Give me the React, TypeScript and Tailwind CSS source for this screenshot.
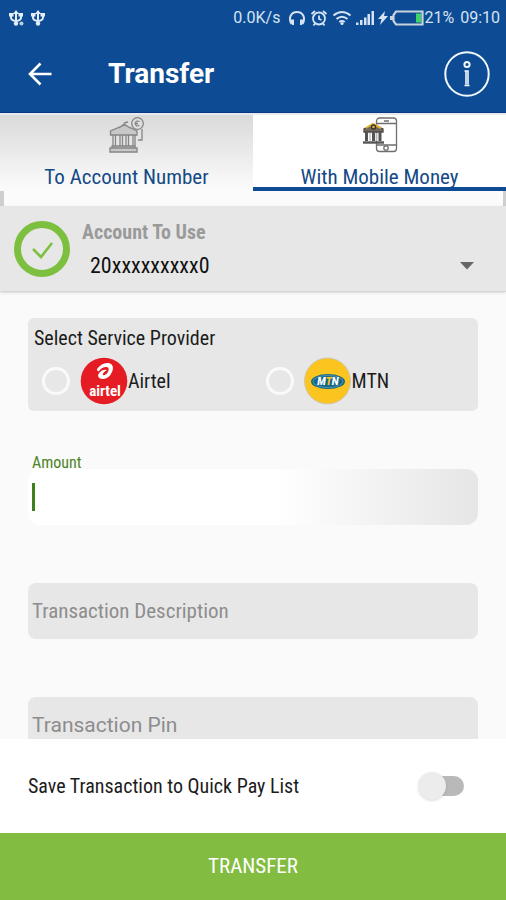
import type { ReactNode } from "react";

const TEXT = "font-['Roboto_Condensed',Roboto,sans-serif]";

function UsbIcon({ dot }: { dot?: boolean }) {
  return (
    <svg viewBox="0 0 16 16" className="h-4 w-4" fill="none" stroke="#e4edf7" strokeWidth="2" aria-hidden="true">
      <path d="M8 2v12M3 4v3.500q0 3 5 3.500M13 4v3.500q0 3-5 3.500" />
      <path d="M8 0l3 4H5zM1 3h4.500v3.500H1zM10.500 3H15v3.500h-4.500z" fill="#e4edf7" stroke="none" />
      <circle cx="8" cy="13.500" r="2.200" fill="#e4edf7" stroke="none" />
      {dot && <circle cx="13.500" cy="13.500" r="2" fill="#b9cfe8" stroke="none" />}
    </svg>
  );
}

function StatusBar() {
  return (
    <div className="flex h-9 items-center justify-between pr-1.5 pl-2 text-base text-[#d5e3f4] font-[Roboto,sans-serif]">
      <div className="flex gap-1.5">
        <UsbIcon dot />
        <UsbIcon />
      </div>
      <div className="flex items-center">
        <span>0.0K/s</span>
        <svg viewBox="0 0 18 18" className="ml-2 h-[18px] w-[18px]" fill="none" stroke="currentColor" strokeWidth="2" aria-hidden="true">
          <path d="M3.500 15C0 9 3 3 9 3s9 6 5.500 12" />
          <path d="M2 10.500h4V16H4zM16 10.500h-4V16h2z" fill="currentColor" stroke="none" />
        </svg>
        <svg viewBox="0 0 18 18" className="ml-1 h-[18px] w-[18px]" fill="none" stroke="currentColor" strokeWidth="1.800" aria-hidden="true">
          <circle cx="9" cy="9.500" r="6" />
          <path d="M9 6.500v3.500l2.500 1M1.500 5L5 2M16.500 5L13 2M5 14.500L3.500 16.500M13 14.500l1.500 2" />
        </svg>
        <svg viewBox="0 0 20 18" className="ml-1 h-[18px] w-5" fill="none" stroke="currentColor" strokeWidth="2" aria-hidden="true">
          <path d="M1.500 6.500q8.500-7 17 0M4.500 10q5.500-4.500 11 0M7.300 13q2.700-2 5.400 0" />
          <circle cx="10" cy="14.500" r="1.600" fill="currentColor" stroke="none" />
        </svg>
        <svg viewBox="0 0 18 18" className="ml-1 h-[18px] w-[18px]" fill="currentColor" aria-hidden="true">
          <path d="M0 13.500h2.500V16H0zM4 11h2.500v5H4zM8 8.500h2.500V16H8zM11.500 5H14v11h-2.500zM15.500 2H18v14h-2.500z" />
        </svg>
        <svg viewBox="0 0 10 18" className="ml-1 h-[18px] w-2.5" fill="currentColor" aria-hidden="true">
          <path d="M7 2L0 10h3.500L2 16l8-9H6z" />
        </svg>
        <svg viewBox="0 0 34 18" className="ml-0.5 h-[18px] w-[34px]" fill="none" aria-hidden="true">
          <path d="M6 2.500h26.500v13H6L3.500 12V6z" stroke="#c9d3dc" strokeWidth="2.200" />
          <path d="M0 7h3v4H0z" fill="#c9d3dc" />
          <path d="M26 4.500h5v9h-5z" fill="#3fd468" />
        </svg>
        <span>21%</span>
        <span className="ml-1.5">09:10</span>
      </div>
    </div>
  );
}

function Header() {
  return (
    <header className="h-[113px] shrink-0 border-b border-[#073b80] bg-[#0d4c94]">
      <StatusBar />
      <div className="flex h-[76px] items-center pr-4 pl-7">
        <button type="button" aria-label="Back" className="text-white">
          <svg viewBox="0 0 24 24" className="h-6 w-6" fill="none" stroke="currentColor" strokeWidth="2.600" aria-hidden="true">
            <path d="M23.500 12H3M12.500 1.500L2 12l10.500 10.500" />
          </svg>
        </button>
        <h1 className="ml-14 flex-1 text-[28px] font-bold text-white font-[Roboto,sans-serif]">Transfer</h1>
        <button type="button" aria-label="Information">
          <svg viewBox="0 0 46 46" className="h-[46px] w-[46px]" fill="none" stroke="#f1f7fd" aria-hidden="true">
            <circle cx="23" cy="23" r="21.700" strokeWidth="2" />
            <circle cx="23" cy="13.500" r="2.600" strokeWidth="2" />
            <path d="M20.500 20h3.500v13.500M20.500 34.500h5M22 20.500v13" strokeWidth="1.600" />
          </svg>
        </button>
      </div>
    </header>
  );
}

function BankIcon() {
  return (
    <svg viewBox="0 0 36 36" className="h-9 w-9" fill="none" stroke="#858585" strokeWidth="1.300" aria-hidden="true">
      <path d="M1.500 18V14l14-6 12.500 6v4zM1 31h27v4H1zM3 31v-2h23v2M10 11l5-4 6 4" fill="#c8c8c8" />
      <path d="M4 18v11M6.500 18v11M11 18v11M13.500 18v11M17 18v11M19.500 18v11M24 18v11M26 18v11" />
      <circle cx="28.500" cy="6.500" r="5.800" />
      <path d="M30.500 4.500q-4-1.500-4 2t4 2M25.500 6.500h3.500M33 12v11h-4M15 6l4-1" />
    </svg>
  );
}

function MobileMoneyIcon() {
  return (
    <svg viewBox="0 0 36 36" className="h-9 w-9" fill="none" stroke="#6f6f6f" strokeWidth="1.300" aria-hidden="true">
      <rect x="14.500" y="1" width="20" height="33.500" rx="3" fill="#fff" />
      <path d="M15 6.500h19M15 28h19M22 4h5" />
      <circle cx="24" cy="31" r="2.200" />
      <path d="M2 15v-3l9-4 10 4v3z" fill="#72685c" stroke="#4a4a4a" />
      <path d="M4 11l7-4 8 4" stroke="#e4b136" strokeWidth="2" />
      <circle cx="11.500" cy="10" r="2" fill="#e4b136" stroke="#333" />
      <path d="M4.500 15v9M11.500 15v9M18 15v9" stroke="#555" strokeWidth="3" />
      <path d="M8 16v8M14.500 16v8" stroke="#bbb" />
      <path d="M1 25.500h21" stroke="#555" strokeWidth="2.400" />
    </svg>
  );
}

function Tab({ label, icon, active }: { label: string; icon: ReactNode; active?: boolean }) {
  return (
    <button
      type="button"
      role="tab"
      aria-selected={!!active}
      className={`${TEXT} flex h-[76px] flex-1 flex-col items-center justify-end border-b-4 text-[21px] leading-5 text-[#144a86] ${
        active
          ? "border-[#0d4c94] bg-white"
          : "border-[#fafafa] bg-linear-to-b from-[#dadada] to-[#fafafa]"
      }`}
    >
      {icon}
      <span className="mt-3.5">{label}</span>
    </button>
  );
}

function Provider({ name, logo }: { name: string; logo: ReactNode }) {
  return (
    <label className="flex items-center">
      <input type="radio" name="provider" className="mr-2.5 h-7 w-7 appearance-none rounded-full border-3 border-[#fafafa] checked:bg-[#7fbf40]" />
      {logo}
      <span>{name}</span>
    </label>
  );
}

function AirtelLogo() {
  return (
    <svg viewBox="0 0 48 48" className="h-12 w-12" aria-hidden="true">
      <circle cx="24" cy="24" r="23.300" fill="#e51c23" />
      <path d="M17 12q5-7 12-6 6 2 3 9-3 7-9 7-5 0-5-4 3-6 9-5-5 3-4 5 3 1 5-3 2-5-2-5-4 0-7 4-2 1-2-2" fill="#fff" />
      <text x="25" y="39" textAnchor="middle" fontSize="15" fontWeight="700" fill="#fff" fontFamily="Roboto Condensed, Roboto, sans-serif">airtel</text>
    </svg>
  );
}

function MtnLogo() {
  return (
    <svg viewBox="0 0 48 48" className="h-12 w-12" aria-hidden="true">
      <circle cx="23.500" cy="24" r="23" fill="#fbc41f" stroke="#cfc7ae" />
      <ellipse cx="24" cy="24.500" rx="17" ry="7.500" fill="#16688a" />
      <ellipse cx="24" cy="24.500" rx="15" ry="6" fill="none" stroke="#5f9fac" strokeWidth="0.800" />
      <text x="24" y="28" textAnchor="middle" fontSize="10" fontWeight="900" fontStyle="italic" fill="#fff" fontFamily="Roboto, sans-serif">
        M<tspan fill="#fbc41f">T</tspan>N
      </text>
    </svg>
  );
}

export default function App() {
  return (
    <div className={`${TEXT} flex h-screen flex-col bg-[#fafafa] text-[#1c1c1c]`}>
      <Header />

      <div role="tablist" className="flex shrink-0 border-t-2 border-[#e6e8f2]">
        <Tab label="To Account Number" icon={<BankIcon />} />
        <Tab label="With Mobile Money" icon={<MobileMoneyIcon />} active />
      </div>
      <div className="h-[15px] shrink-0 border-r-3 border-l-4 border-[#cfcfcf] bg-[#fbfbfb]" />

      <section className="flex h-[86px] shrink-0 items-center border-b border-[#d6d6d6] bg-[#e7e7e7] pr-8 pl-3.5 shadow-sm">
        <svg viewBox="0 0 56 56" className="h-14 w-14 shrink-0" fill="none" stroke="#7dbf3e" aria-hidden="true">
          <circle cx="28" cy="28" r="24.500" strokeWidth="7" />
          <path d="M19 28l8 8 11-14" strokeWidth="2.600" />
        </svg>
        <div className="ml-3 flex flex-1 flex-col pt-1.5">
          <label htmlFor="account" className="text-[20px] leading-6 font-bold text-[#9a9a9a]">Account To Use</label>
          <div className="flex items-center pt-1">
            <select id="account" className="h-9 flex-1 appearance-none bg-transparent pl-2 text-[22px] text-[#111]">
              <option>20xxxxxxxxx0</option>
            </select>
            <svg viewBox="0 0 14 8" className="h-2 w-3.5" fill="#666" aria-hidden="true">
              <path d="M0 0h14L7 7.500z" />
            </svg>
          </div>
        </div>
      </section>

      <main className="min-h-0 flex-1 overflow-hidden px-7 pt-[26px]">
        <fieldset className="h-[93px] rounded-md bg-[#e7e7e7] px-1.5 pt-2 text-[20px]">
          <legend className="float-left w-full leading-6">Select Service Provider</legend>
          <div className="grid w-full grid-cols-[52%_auto] pt-[7px] pl-2">
            <Provider name="Airtel" logo={<AirtelLogo />} />
            <Provider name="MTN" logo={<MtnLogo />} />
          </div>
        </fieldset>

        <label htmlFor="amount" className="mt-[42px] block h-4 px-1 text-base leading-5 text-[#4c8527]">Amount</label>
        <div className="flex h-14 items-center rounded-xl bg-linear-to-r from-white from-55% to-[#e6e6e6] pl-1">
          <span className="h-7 w-[3px] bg-[#3f7f1c]" />
          <input id="amount" type="text" inputMode="decimal" className="h-full min-w-0 flex-1 bg-transparent px-1 text-[20px] outline-none" />
        </div>

        <input
          type="text"
          aria-label="Transaction Description"
          placeholder="Transaction Description"
          className="mt-[58px] block h-14 w-full rounded-lg bg-[#e7e7e7] px-1 text-[21px] placeholder:text-[#8d8d8d]"
        />
        <input
          type="password"
          aria-label="Transaction Pin"
          placeholder="Transaction Pin"
          className="mt-[58px] block h-14 w-full rounded-lg bg-[#e7e7e7] px-1 text-[21px] font-[Roboto,sans-serif] placeholder:text-[#8d8d8d]"
        />
      </main>

      <label className="flex h-[94px] shrink-0 items-center justify-between bg-white pr-10 pl-7 text-[20px]">
        <span>Save Transaction to Quick Pay List</span>
        <input
          type="checkbox"
          role="switch"
          className="relative mr-0.5 h-5 w-9 appearance-none rounded-full bg-[#b9b9b9] before:absolute before:-top-1 before:-left-2.5 before:h-7 before:w-7 before:rounded-full before:bg-[#ececec] before:shadow before:content-[''] checked:bg-[#a5d279] checked:before:left-4"
        />
      </label>
      <button type="button" className="h-[67px] shrink-0 bg-[#82bd41] text-[21px] text-white">TRANSFER</button>
    </div>
  );
}
